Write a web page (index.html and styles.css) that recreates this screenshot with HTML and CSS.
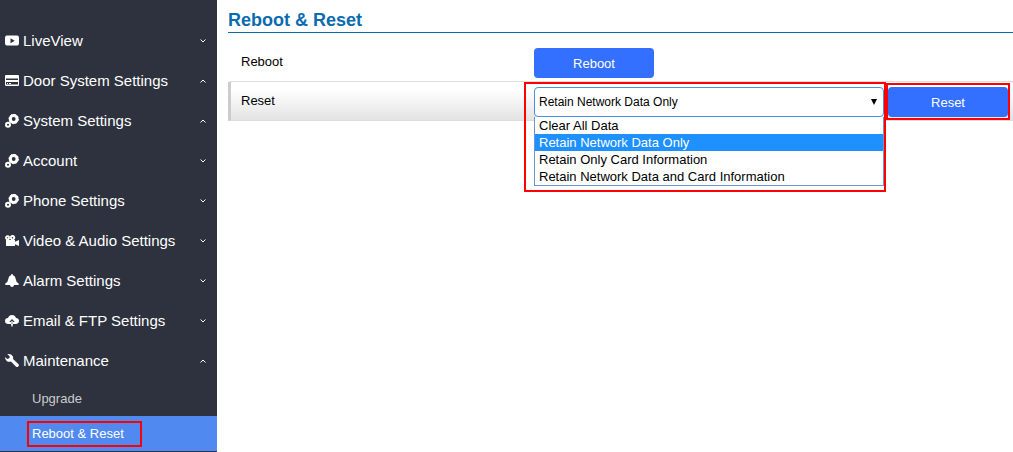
FILE: index.html
```html
<!DOCTYPE html>
<html lang="en">

<head>
    <meta charset="UTF-8">
    <meta name="viewport" content="width=device-width, initial-scale=1.0">
    <title>Reboot &amp; Reset</title>
    <link rel="stylesheet" href="styles.css">
</head>

<body>
    <!-- Shared icons -->
    <svg class="sprite" aria-hidden="true">
        <symbol id="gears" viewBox="0 0 14 14">
            <circle cx="8.7" cy="5" r="3.4" fill="none" stroke="#fff" stroke-width="3"/>
            <circle cx="8.7" cy="5" r="4.7" fill="none" stroke="#fff" stroke-width="1" stroke-dasharray="1.8 1.8"/>
            <circle cx="3" cy="10.800" r="2" fill="none" stroke="#fff" stroke-width="2"/>
        </symbol>
        <symbol id="down" viewBox="0 0 6 4">
            <path d="M.5 .5 3 3 5.5 .5" fill="none" stroke="#fff"/>
        </symbol>
        <symbol id="up" viewBox="0 0 6 4">
            <path d="M.5 3.5 3 1 5.5 3.5" fill="none" stroke="#fff"/>
        </symbol>
    </svg>

    <nav class="sidebar">
        <a href="#" class="item">
            <svg class="icon" viewBox="0 0 14 14"><path fill="#fff" fill-rule="evenodd" d="M2 1.500h10q2 0 2 2v6q0 2-2 2H2q-2 0-2-2v-6q0-2 2-2zM5.500 4.300v5L9.700 6.800z"/></svg>
            <span>LiveView</span>
            <svg class="arrow"><use href="#down"/></svg>
        </a>
        <a href="#" class="item">
            <svg class="icon" viewBox="0 0 14 14"><path fill="#fff" fill-rule="evenodd" d="M1 1h12q1 0 1 1v9q0 1-1 1H1q-1 0-1-1V2q0-1 1-1zM1 4v2h12V4zM1 8v3h12V8z"/><path fill="#fff" d="M2 9h1v1H2zM4 9h2v1H4z"/><path fill="#fff" opacity=".5" d="M1 4h12v1H1zM1 10h12v1H1z"/></svg>
            <span>Door System Settings</span>
            <svg class="arrow"><use href="#up"/></svg>
        </a>
        <a href="#" class="item">
            <svg class="icon"><use href="#gears"/></svg>
            <span>System Settings</span>
            <svg class="arrow"><use href="#up"/></svg>
        </a>
        <a href="#" class="item">
            <svg class="icon"><use href="#gears"/></svg>
            <span>Account</span>
            <svg class="arrow"><use href="#down"/></svg>
        </a>
        <a href="#" class="item">
            <svg class="icon"><use href="#gears"/></svg>
            <span>Phone Settings</span>
            <svg class="arrow"><use href="#down"/></svg>
        </a>
        <a href="#" class="item">
            <svg class="icon" viewBox="0 0 14 14"><g fill="#fff"><path d="M1 6h9v6H1zM9.500 8 14 6v6l-4.500-2z"/><path fill-rule="evenodd" d="M2.600 1.300a2.500 2.500 0 1 0 .01 0zM2.600 3.200a.6.600 0 1 1-.01 0zM7.500 1a2.700 2.700 0 1 0 .01 0zM7.500 3a.7.700 0 1 1-.01 0z"/></g></svg>
            <span>Video &amp; Audio Settings</span>
            <svg class="arrow"><use href="#down"/></svg>
        </a>
        <a href="#" class="item">
            <svg class="icon" viewBox="0 0 14 14"><path fill="#fff" d="M7 0q1 0 1 1.300Q10.500 2 10.700 5q.2 3 3 4.500v1.500H.3V9.500Q3.100 8 3.300 5 3.500 2 6 1.300 6 0 7 0zM5 11h4Q8.800 13 7 13t-2-2z"/></svg>
            <span>Alarm Settings</span>
            <svg class="arrow"><use href="#down"/></svg>
        </a>
        <a href="#" class="item">
            <svg class="icon" viewBox="0 0 14 14"><path fill="#fff" fill-rule="evenodd" d="M3 4Q4 1 7 1t4 3q3 .3 3 3t-3.500 3H3.500Q0 10 0 7t3-3zM7 5 4.300 8H6v2.500h2V8h1.700z"/><path fill="#fff" d="M6.300 7h1.400v5.500H6.300z"/></svg>
            <span>Email &amp; FTP Settings</span>
            <svg class="arrow"><use href="#down"/></svg>
        </a>
        <a href="#" class="item">
            <svg class="icon" viewBox="0 0 14 14"><path fill="#fff" d="M2.200.3Q5.800-.6 7.600 2q1 1.500.4 3l5.400 5q1 1.200-.1 2.400t-2.500.1L6 7.500Q3.700 8.400 1.700 7 0 5.500 0 2.900l2.300 2 2.100-.6.300-2z"/></svg>
            <span>Maintenance</span>
            <svg class="arrow"><use href="#up"/></svg>
        </a>
        <a href="#" class="subitem">Upgrade</a>
        <a href="#" class="subitem active"><span class="marked">Reboot &amp; Reset</span></a>
    </nav>

    <main>
        <h1>Reboot &amp; Reset</h1>

        <div class="row">
            <span class="name">Reboot</span>
            <div class="controls">
                <button type="button">Reboot</button>
            </div>
        </div>

        <div class="row shaded">
            <label class="name" for="resetMode">Reset</label>
            <div class="controls">
                <div class="dropdown">
                    <select id="resetMode">
                        <option>Clear All Data</option>
                        <option selected>Retain Network Data Only</option>
                        <option>Retain Only Card Information</option>
                        <option>Retain Network Data and Card Information</option>
                    </select>
                    <svg class="caret" viewBox="0 0 6 6"><path d="M0 0h6L3 6z"/></svg>
                    <ul class="options">
                        <li>Clear All Data</li>
                        <li class="selected">Retain Network Data Only</li>
                        <li>Retain Only Card Information</li>
                        <li>Retain Network Data and Card Information</li>
                    </ul>
                </div>
                <div class="action">
                    <button type="button">Reset</button>
                </div>
            </div>
        </div>
    </main>
</body>

</html>
```
FILE: styles.css
```css
* {
    box-sizing: border-box;
}

body {
    margin: 0;
    display: flex;
    min-height: 100vh;
    background: #fff;
    color: #000;
    font-family: "Liberation Sans", Arial, sans-serif;
    font-size: 13px;
}

.sprite {
    position: absolute;
    width: 0;
    height: 0;
}

/* Sidebar */
.sidebar {
    flex: 0 0 217px;
    padding-top: 21px;
    background: #2d323e;
}

.item {
    display: flex;
    align-items: center;
    height: 40px;
    padding: 0 11px 0 5px;
    color: #fff;
    font-size: 15px;
    text-decoration: none;
}

.item span {
    padding-bottom: 2px;
}

.icon {
    width: 14px;
    height: 14px;
    margin-right: 4px;
}

.arrow {
    width: 6px;
    height: 4px;
    margin-left: auto;
}

.subitem {
    display: flex;
    align-items: center;
    height: 35px;
    padding-left: 32px;
    color: #ccc;
    text-decoration: none;
}

.subitem.active {
    background: #5089f0;
    color: #fff;
}

/* Red frames round the important parts */
.marked,
.dropdown,
.action {
    position: relative;
}

.marked::after,
.dropdown::after,
.action::after {
    content: "";
    position: absolute;
    border: 2px solid #f00;
    pointer-events: none;
}

.marked::after {
    inset: -5px -18px -6px -5px;
}

.dropdown::after {
    inset: -5px -2px -75px -10px;
}

.action::after {
    inset: -4px -2px -3px;
}

/* Content */
main {
    flex: 1;
    padding: 9px 0 0 11px;
}

h1 {
    margin: 0 0 9px;
    border-bottom: 1px solid #0a6bb0;
    color: #0a6bb0;
    font-size: 18px;
    line-height: 23px;
}

.row {
    display: flex;
    height: 40px;
    padding-top: 1px;
    border-bottom: 1px solid #ddd;
    border-left: 3px solid transparent;
}

.row.shaded {
    height: 39px;
    padding-top: 0;
    border-left-color: #ccc;
    background: linear-gradient(#fff 20%, #e3e3e3);
}

.name {
    flex: 0 0 303px;
    padding-left: 10px;
    line-height: 38px;
}

.controls {
    display: flex;
    align-items: flex-start;
    gap: 4px;
    padding-top: 5px;
}

button {
    display: block;
    width: 120px;
    height: 30px;
    border: 0;
    border-radius: 4px;
    background: #3370ff;
    color: #fff;
    font: 13px "Liberation Sans", Arial, sans-serif;
}

.dropdown {
    width: 350px;
    height: 30px;
}

select {
    display: block;
    width: 100%;
    height: 30px;
    padding: 0 4px;
    appearance: none;
    border: 1px solid #4a90e2;
    border-radius: 4px;
    background: #fff;
    color: #000;
    font: 12px "Liberation Sans", Arial, sans-serif;
}

.caret {
    position: absolute;
    top: 12px;
    right: 7px;
    width: 6px;
    height: 6px;
}

.options {
    position: absolute;
    top: 100%;
    left: 0;
    right: 0;
    margin: 0;
    padding: 0;
    border: 1px solid #6a96d8;
    border-top: 0;
    background: #fff;
    list-style: none;
}

.options li {
    padding-left: 4px;
    line-height: 17px;
}

.options .selected {
    background: #1e90ff;
    color: #fff;
}
```
